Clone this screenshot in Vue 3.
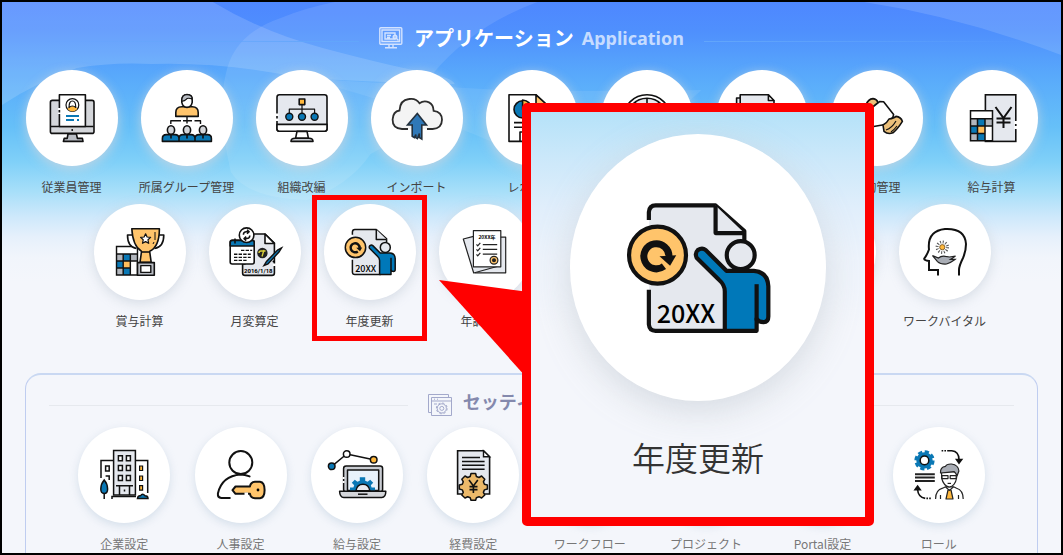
<script setup>
// Пустые пункты меню закрыты увеличенной карточкой
const applicationRows = [
  [
    { id: 'employee', icon: 'ic-employee', label: '従業員管理' },
    { id: 'group', icon: 'ic-group', label: '所属グループ管理' },
    { id: 'organization', icon: 'ic-organization', label: '組織改編' },
    { id: 'import', icon: 'ic-import', label: 'インポート' },
    { id: 'report', icon: 'ic-report', label: 'レポート' },
    { id: 'clock', icon: 'ic-clock', label: '' },
    { id: 'docs', icon: 'ic-docs', label: '' },
    { id: 'contract', icon: 'ic-contract', label: '契約管理' },
    { id: 'payroll', icon: 'ic-payroll', label: '給与計算' }
  ],
  [
    { id: 'bonus', icon: 'ic-bonus', label: '賞与計算' },
    { id: 'monthly', icon: 'ic-monthly', label: '月変算定' },
    { id: 'yearly', icon: 'ic-yearly', label: '年度更新', active: true },
    { id: 'adjust', icon: 'ic-adjust', label: '年調申告' },
    { id: 'slot-1', icon: '', label: '' },
    { id: 'slot-2', icon: '', label: '' },
    { id: 'slot-3', icon: '', label: '' },
    { id: 'vital', icon: 'ic-vital', label: 'ワークバイタル' }
  ]
]

const settings = [
  { id: 'company', icon: 'ic-company', label: '企業設定' },
  { id: 'personnel', icon: 'ic-personnel', label: '人事設定' },
  { id: 'salary', icon: 'ic-salary', label: '給与設定' },
  { id: 'expense', icon: 'ic-expense', label: '経費設定' },
  { id: 'workflow', icon: '', label: 'ワークフロー' },
  { id: 'project', icon: '', label: 'プロジェクト' },
  { id: 'portal', icon: '', label: 'Portal設定' },
  { id: 'role', icon: 'ic-role', label: 'ロール' }
]
</script>

<template>
  <!-- Набор иконок -->
  <svg class="sprite" aria-hidden="true">
    <symbol id="ic-employee" viewBox="0 0 48 48">
      <g stroke="#111" stroke-width="1.6" stroke-linejoin="round">
        <rect x="2.4" y="6.4" width="43.6" height="33" rx="2" fill="#d4d6da" />
        <path d="M3 32.5h42.6" />
        <path d="M20 40h8.4l1 4.4h5l.6 3H15.4l.8-3h3z" fill="#b9bdc4" />
        <path d="M11.4 32.5V.8h26v31.7z" fill="#fff" />
        <circle cx="24.4" cy="11" r="6.4" fill="#fff" stroke-width="1.2" />
        <path d="M19.4 15q1.4-3 5-3t5 3q-2 2.4-5 2.4t-5-2.4z" fill="#ffb83d" stroke="none" />
        <path d="M21 13.500q0-6.500 3.400-6.500t3.400 6.500q-1.400-1.500-3.400-1.500t-3.400 1.500z" fill="#fff" stroke-width="1.2" />
      </g>
      <path d="M18 22h13M18 26h8M29 26h2" stroke="#0a78b5" stroke-width="1.8" />
      <path d="M11.400 14v2M11.400 18.500v1.500" stroke="#fff" stroke-width="3" />
      <circle cx="24.2" cy="36" r=".9" />
    </symbol>

    <symbol id="ic-group" viewBox="0 0 48 48">
      <g stroke="#111" stroke-width="1.6" stroke-linejoin="round">
        <path d="M12.800 22.400v-4q0-5.400 6-5.600h10.400q6 .2 6 5.600v4z" fill="#ffc46b" />
        <path d="M18.800 6q0-5.400 5.200-5.400T29.200 6v2.400q-1 5-5.200 5t-5.200-5z" fill="#fff" />
        <path d="M18.800 7q0-6.400 5.200-6.400T29.200 5q-5-1.600-6 .4-2 2-4.400 1.600z" fill="#b9bdc4" stroke-width="1.2" />
        <path d="M24 22.400v7M7.800 30v-3.200H18M20 26.800h9M31.500 26.800h6V30" fill="none" stroke-width="1.4" />
        <path d="M-.6 47.400v-3q0-3.800 4-3.800H12q4 0 4 3.800v3zM16 47.400v-3q0-3.800 4-3.800h8q4 0 4 3.800v3zM32 47.400v-3q0-3.800 4-3.800h8.400q4 0 4 3.800v3z" fill="#0a78b5" />
        <ellipse cx="8" cy="36" rx="3.600" ry="4.300" fill="#d4d6da" />
        <ellipse cx="24" cy="36" rx="3.600" ry="4.300" fill="#d4d6da" />
        <ellipse cx="40" cy="36" rx="3.600" ry="4.300" fill="#d4d6da" />
        <path d="M8 40.600v4M24 40.600v4M40 40.600v4" />
      </g>
    </symbol>

    <symbol id="ic-organization" viewBox="0 0 48 48">
      <g stroke="#111" stroke-width="1.6" stroke-linejoin="round">
        <rect x="-1" y=".8" width="50" height="36.400" rx="2.400" fill="#e5e8ee" />
        <path d="M-1 30.400h50v4.400q0 2.400-2.400 2.400H1.400Q-1 37.200-1 34.800z" fill="#fff" />
        <path d="M19 37.400h10l1.400 6.800H17.600z" fill="#fff" />
        <path d="M13 47.400q0-3.200 4-3.200h14q4 0 4 3.200z" fill="#c9ccd2" />
        <path d="M24 10v9M11.300 19v-3.800h25.300V19" fill="none" stroke-width="1.2" />
        <rect x="21.200" y="5" width="5.600" height="5.600" fill="#ffb83d" />
        <circle cx="11.300" cy="22.700" r="3.500" fill="#0a78b5" stroke-width="1.4" />
        <circle cx="24" cy="22.700" r="3.500" fill="#0a78b5" stroke-width="1.4" />
        <circle cx="36.600" cy="22.700" r="3.500" fill="#0a78b5" stroke-width="1.4" />
      </g>
      <path d="M-1 19.500v2.500M-1 24.500v2.500" stroke="#fff" stroke-width="3" />
    </symbol>

    <symbol id="ic-import" viewBox="0 0 48 48">
      <path d="M15 35H9Q-.6 34.500-.4 25.500 0 17.500 6.500 16.500 7 6 16 5q7-1.200 10.500 4.200Q31 6 36 8.400q4.400 2 4.600 8.400 8.400 1 8.400 9-.2 9-9.400 9.200H34" fill="#f4f4f4" stroke="#2d2d2d" stroke-width="1.8" />
      <path d="M24.300 19.400L33.500 31h-4.700v14l-2.400-1.400v-4l-2 5-1.600-1v-3l-1.400 3-2.200-1.400V31h-4.700z" fill="#2f78b7" stroke="#23303c" stroke-width="1.6" />
    </symbol>

    <symbol id="ic-report" viewBox="0 0 48 48">
      <g stroke="#111" stroke-width="1.6" stroke-linejoin="round">
        <path d="M1 47.400V.8h27L38 10v37.400z" fill="#fff" />
        <path d="M28 .8L38 10H28z" fill="#ffc46b" />
        <circle cx="14.600" cy="15.400" r="8.600" fill="#0a78b5" />
        <path d="M14.600 15.400V6q8 .6 9 9.400z" fill="#ffb83d" />
        <path d="M6 28.600h24M6 33.200h24M12 47v-9h8v9" fill="none" />
      </g>
    </symbol>

    <symbol id="ic-clock" viewBox="0 0 48 48">
      <g stroke="#111" stroke-width="1.6" fill="none">
        <circle cx="24" cy="24.800" r="24" fill="#fff" />
        <circle cx="24" cy="24.800" r="20.500" fill="#e5e8ee" />
        <path d="M24 4v12M12 8l3 5M36 8l-3 5M24 25l8 6" />
      </g>
    </symbol>

    <symbol id="ic-docs" viewBox="0 0 48 48">
      <g stroke="#111" stroke-width="1.6" stroke-linejoin="round" fill="#e5e8ee">
        <path d="M-1.400 47V4h32v43z" />
        <path d="M2.200 42V.8h28L36 7v35z" />
        <path d="M30.400.8V6.500H36z" fill="#fff" />
      </g>
    </symbol>

    <symbol id="ic-contract" viewBox="0 0 48 48">
      <g stroke="#111" stroke-width="1.6" stroke-linejoin="round">
        <path d="M13 11q2-6 7-6.400 4 .6 5 4l-6 5z" fill="#ecc07a" />
        <path d="M20 13l6.600-5.400 4 .2L40.600 20.500q0 4-8.400 10L12 34z" fill="#fff" />
        <path d="M30 31q4-2 6-6 5-.6 7-2.600 5 .6 6.400 5-5 8-9.400 11.400-5 2-9-1.400z" fill="#ecc07a" />
        <path d="M33 36q6-2 10-9M38 38q3-2 6-6" fill="none" stroke-width="1.2" />
      </g>
    </symbol>

    <symbol id="ic-calc" viewBox="0 0 24 32">
      <path d="M1 1h22v30H1z" fill="#fff" />
      <path d="M1 9h7v7.300H1zM15.500 9H23v7.300h-7.500zM1 23.600h7V31H1z" fill="#b2b6bd" />
      <path d="M8 9h7.500v7.300H8zM1 16.300h7v7.300H1zM8 23.600h7.500V31H8z" fill="#0a78b5" />
      <path d="M8 16.300h7.500v7.300H8z" fill="#ffbe5c" />
      <path d="M1 1h22v30H1zM1 9h22M1 16.300h22M1 23.600h14.500M8 9v22M15.500 9v22" fill="none" stroke="#111" stroke-width="1.5" />
    </symbol>

    <symbol id="ic-payroll" viewBox="0 0 48 48">
      <rect x="17.400" y=".8" width="30.400" height="46.600" fill="#e5e8ee" stroke="#111" stroke-width="1.6" />
      <path d="M47.800 27v3M47.800 32v3" stroke="#fff" stroke-width="3" />
      <use href="#ic-calc" x="1.500" y="15.600" width="24" height="32.400" />
      <path d="M27.500 13l8 11 8-11M35.500 24v10M28.500 24.500h14M28.500 28.500h14" fill="none" stroke="#111" stroke-width="2" />
    </symbol>

    <symbol id="ic-bonus" viewBox="0 0 48 48">
      <use href="#ic-calc" x="-.5" y="17.500" width="23" height="30.500" />
      <g stroke="#111" stroke-width="1.6" stroke-linejoin="round">
        <path d="M17 7h-5.500q0 12 9 13.500M42 7h5.800q0 12-9.200 13.500" fill="#fff" />
        <path d="M15.800.8h27.600q0 18-9.600 22.400v1.200l1.400 10H24l1.400-10v-1.200Q16.800 18 15.800.8z" fill="#ffc46b" />
        <path d="M25.500 24h8.200" />
        <rect x="21.500" y="34.600" width="16.800" height="12.600" fill="#b9bdc4" />
        <rect x="24.800" y="37.600" width="10" height="6.800" fill="#fff" stroke-width="1.4" />
        <path d="M29.600 5.800l1.500 3.200 3.500.4-2.600 2.400.7 3.500-3.100-1.700-3.100 1.700.7-3.500-2.600-2.400 3.500-.4z" fill="#fff" stroke-width="1.2" />
        <path d="M39 4v8M38 14l-1 2" stroke-width="1" />
      </g>
    </symbol>

    <symbol id="ic-monthly" viewBox="0 0 48 48">
      <g stroke="#111" stroke-width="1.6" stroke-linejoin="round">
        <path d="M11.600 36v9q0 2.400 2.400 2.400h27q2.400 0 2.400-2.400V15L34 6H14v30z" fill="#e5e8ee" />
        <path d="M34 6v9.500h9.400z" fill="#fff" />
        <rect x="-.8" y="12.400" width="24" height="23.600" rx="2" fill="#fff" />
        <path d="M-.8 18v-3.400q0-2.200 2.200-2.200H21q2.200 0 2.200 2.200V18z" fill="#0a78b5" />
        <path d="M4 10.500v5" />
        <circle cx="15.600" cy="7.200" r="7.300" fill="#fff" />
        <path d="M12.400 6.800q0-3 3-3h2.400M16 1.800l2.200 2-2.200 2M18.800 7.600q0 3-3 3h-2.400M15.200 8.600l-2.200 2 2.200 2" fill="none" stroke-width="1.5" />
      </g>
      <path d="M10 22.400h3.400m1.200 0H18m1.200 0h2M3 26.200h3.400m1.200 0H11m1.200 0h3.400m1.200 0h3M3 29.400h3.400m1.200 0H11m1.200 0h3.400m1.200 0h3M3 32.400h3.400m1.200 0H11m1.200 0h3.400" stroke="#111" stroke-width="1.4" />
      <circle cx="31.400" cy="25" r="5.200" fill="#222" />
      <path d="M28 25q0-2 2-2h4.500M33 22l-2 6.500" fill="none" stroke="#d9cf3a" stroke-width="1.4" />
      <path d="M50.500 20l-4 2-11 11.500-2.500 4 4-1.600L48 24z" fill="#0a78b5" stroke="#111" stroke-width="1.4" />
      <circle cx="42.600" cy="33.500" r="1.100" />
      <path d="M43.400 35.500v2.500" stroke="#fff" stroke-width="3" />
      <text x="27.300" y="44.600" text-anchor="middle" font-family="Roboto, sans-serif" font-weight="700" font-size="6">2016/1/18</text>
    </symbol>

    <symbol id="ic-yearly" viewBox="0 0 48 48">
      <path d="M6.400 46.500V1.600h24l10.200 9.600v35.300z" fill="#e5e8ee" />
      <path d="M3.500 7h3v25h-3z" fill="#fff" />
      <g fill="none" stroke="#111" stroke-width="1.5" stroke-linejoin="round">
        <path d="M6.400 6.800V4q.2-2.400 2.400-2.400h21.500l10.300 9.200v3.400M6.400 31.800v12.400q.2 2.300 2.400 2.300h26" />
        <path d="M30.300 1.600v9.900h10.300" fill="#e5e8ee" />
        <circle cx="9.500" cy="19.400" r="10.200" fill="#ffc46b" />
        <circle cx="39.300" cy="19.400" r="5" fill="#e5e8ee" />
        <path d="M26.800 17.600l7.400 7.400H44q5 .4 5.200 5.600v10.800q0 2-1.700 2t-2.500-1.200v4.300H33.600V32.400q0-2.400-2.100-4.200l-8-7.900q-.7-1.600.4-2.700 1.600-1 2.900 0z" fill="#0078b9" />
        <path d="M45 29.800v13" />
      </g>
      <path d="M13.600 20A4.500 4.500 0 1 0 11.800 23.400" fill="none" stroke="#111" stroke-width="2.500" />
      <path d="M10.200 19.800l6-.4-2.200 3.800z" fill="#111" />
      <text x="19.700" y="43.800" text-anchor="middle" font-family="'Noto Sans CJK JP', sans-serif" font-weight="500" font-size="9">20XX</text>
    </symbol>

    <symbol id="ic-adjust" viewBox="0 0 48 48">
      <g stroke="#222" stroke-width="1.2" stroke-linejoin="round">
        <path d="M36 9.200h8.700v35.600H14z" fill="#e5e8ee" />
        <path d="M12.500 8.400L2.300 11l10.400 34L36 38.500z" fill="#e5e8ee" />
        <path d="M12.400 2.600h27.400v36.200H12.400z" fill="#fff" />
        <path d="M21.800 16.600h14.400M21.800 21.400h14.400M21.800 26.200h14.400" />
        <path d="M15.500 16.400l1.200 1.400 2.600-3M15.500 21.400l1.200 1.400 2.600-3M15.500 26.400l1.200 1.400 2.600-3" fill="none" />
        <circle cx="33" cy="32.200" r="3.900" fill="#ffc46b" />
        <circle cx="33" cy="32.200" r="1.400" fill="#222" />
      </g>
      <text x="26" y="11" text-anchor="middle" font-family="'Noto Sans CJK JP', sans-serif" font-weight="700" font-size="5">20XX年</text>
    </symbol>

    <symbol id="ic-vital" viewBox="0 0 48 48">
      <path d="M17 47.500V42H8v-9q-5-.6-4.800-2.400Q6 27 8 21.500 6 3 24 1q20-1 21 15 0 7-3 14-4 8-4 12v5.500" fill="none" stroke="#111" stroke-width="2" />
      <circle cx="21.300" cy="19.200" r="5.200" fill="none" stroke="#555" stroke-width="3" stroke-dasharray="1 1.700" />
      <circle cx="21.300" cy="19.200" r="2.600" fill="#ffb83d" stroke="#6b4a1c" stroke-width=".8" />
      <path d="M11.500 27.600l6 2.400q3-2.600 7-1.600l4 .6 6-1-5 3.400h4.500q-4 3-8.500 4.600-6 .4-9-2.400z" fill="#a9adb5" stroke="#222" stroke-width="1.2" />
    </symbol>

    <symbol id="ic-company" viewBox="0 0 48 48">
      <g stroke="#111" stroke-width="1.5" fill="none">
        <path d="M1 27V9.600h12M35.500 9.600h12.200V42" />
        <path d="M13.600 44V-.4h21.800V44z" fill="#e5e8ee" />
        <path d="M18.400 4.800h4v5h-4zM26.400 4.800h4v5h-4zM18.400 14.600h4v5h-4zM26.400 14.600h4v5h-4zM18.400 24.500h4v5h-4zM26.400 24.500h4v5h-4z" fill="#fff" />
        <path d="M5.600 15h3.600v5H5.600zM5.600 25h3.600v4" />
        <path d="M39.600 15h3v4.500h-3zM39.600 25h3v4.500h-3zM39.600 34.700h3v4.500h-3z" fill="#ffb83d" stroke-width="1.2" />
        <path d="M16 34.800h17M19.500 35v9M29.500 35v9M24.500 38.500v2M12 48v-2.500h24" />
        <path d="M4.200 42v6" />
        <path d="M4.200 29q3.400 4 3.400 9 0 4.500-3.400 4.500T.8 38q0-5 3.400-9z" fill="#0a78b5" />
        <path d="M37.500 47.400q.5-3 3-2.600 2-3 4.500 0 3 0 3 2.600z" fill="#0a78b5" />
      </g>
    </symbol>

    <symbol id="ic-personnel" viewBox="0 0 48 48">
      <g stroke="#111" stroke-width="2" stroke-linecap="round" stroke-linejoin="round" fill="none">
        <circle cx="23.800" cy="11.600" r="11.500" />
        <path d="M32.600 25.400q-5-1.800-9-1.800Q5 25 .9 42.500q-.4 4 3.400 4.600h8.500" />
        <path d="M18.500 35.500H33q.5-4.400 5-4.800h5q4.600.6 4.600 8.300T43 47.200h-5q-4.500-.2-5-4.400H18.500l-3-3.600z" fill="#ffc46b" />
      </g>
      <path d="M27.500 43h3.500" stroke="#fff" stroke-width="3" />
      <circle cx="41" cy="39" r="1.400" />
    </symbol>

    <symbol id="ic-salary" viewBox="0 0 48 48">
      <g stroke="#111" stroke-width="1.5" stroke-linejoin="round">
        <path d="M-1.300 15.300l15-12.300 27 5.700" fill="none" />
        <circle cx="-1.300" cy="15.300" r="3.300" fill="#0a78b5" />
        <circle cx="13.700" cy="3" r="3.300" fill="#fff" />
        <circle cx="40.700" cy="8.700" r="3.300" fill="#ffb83d" />
        <rect x="10.600" y="15" width="39" height="26" rx="2.500" fill="#c9ccd2" />
        <path d="M14.500 19h31.200v20.500H14.500z" fill="#e8f2fb" />
        <path d="M6.600 40.300h46.200q0 6.200-4 6.200h-38q-4 0-4.200-6.200z" fill="#d4d6da" />
        <path d="M25 43.200h9.500" />
      </g>
      <path d="M17 39.200v-2.600h3.400l.8-2.400-2.400-2.400 3-3 2.600 2 2.400-1v-3.600h5.400v3.600l2.400 1 2.600-2 3 3-2.400 2.400.8 2.400H42v2.600z" fill="#0a78b5" />
      <path d="M23 39.600q1-6.400 6.900-6.400t6.900 6.400z" fill="#e8eaee" stroke="#111" stroke-width="1.4" />
      <path d="M10.600 26v2M10.600 30v2" stroke="#fff" stroke-width="2" />
    </symbol>

    <symbol id="ic-expense" viewBox="0 0 48 48">
      <path d="M8.600 43V-.2h26l6 6V43z" fill="#e5e8ee" stroke="#111" stroke-width="1.6" />
      <path d="M34.500-.2v6h6.100z" fill="#fff" stroke="#111" stroke-width="1.4" />
      <path d="M13 6.400h18M13 10.400h22.600M13 14.200h22.600M13 18.200h22.600" stroke="#111" stroke-width="1.5" />
      <path d="M22 22.500h4.600l.8 3 2.600 1 2.600-1.500 3.200 3.200-1.400 2.600 1 2.400 3 .8v4l-3 .9-1 2.500 1.400 2.600-3.200 3-2.600-1.300-2.600 1-.8 2.600H22l-.8-2.600-2.500-1-2.700 1.300-3.200-3 1.500-2.600-1-2.500-3-.9v-4l3-.8 1-2.400-1.500-2.600L16 25l2.700 1.500 2.500-1z" fill="#ecb96a" stroke="#111" stroke-width="1.5" stroke-linejoin="round" />
      <path d="M20 29l4.400 6 4.400-6M24.400 35v7M20.500 35.600h8M20.500 38.600h8" fill="none" stroke="#111" stroke-width="1.6" />
    </symbol>

    <symbol id="ic-role" viewBox="0 0 48 48">
      <circle cx="9.500" cy="9.400" r="8.600" fill="none" stroke="#0a78b5" stroke-width="3" stroke-dasharray="4.200 2.550" />
      <circle cx="9.500" cy="9.400" r="7" fill="#0a78b5" stroke="#0a78b5" stroke-width="2.400" />
      <circle cx="9.500" cy="9.400" r="4.300" fill="#fff" stroke="#111" stroke-width="1.5" />
      <path d="M0 23.200h19.800M0 26.600h19.800M0 30h19.800" stroke="#222" stroke-width="2" />
      <g fill="none" stroke="#111" stroke-width="1.6">
        <path d="M26.600-.2h1.600m1.200 0H31m1.200 0h4.600q7 .6 7.200 8.700M15.800 47.400h-1.600m-1.200 0h-1.600m-1.200 0Q3 46 2.600 38.500" />
        <path d="M41.500 8.600h5.200L44 12.200zM0 38.600h5.200L2.600 35z" fill="#111" />
      </g>
      <g stroke="#222" stroke-width="1.2" stroke-linejoin="round">
        <path d="M20.600 48q0-9 7-10.800l3-1.400h8l3 1.400q6.600 2 6.600 10.800" fill="#fff" />
        <path d="M26.600 21v6q2 8 7.600 9 6-1 7.400-9v-6z" fill="#fff" />
        <path d="M25.500 22q-.4-6 5-6.600 1-2.600 6-2.400 7 1 7.400 7l-1.900 5q-1-3-3-4.500-6 1-13.500 1.500z" fill="#a9adb5" />
        <path d="M27 24.600h6v3h-6zM35.200 24.600h6v3h-6z" fill="#fff" />
        <path d="M32.600 32.400h3.400" />
        <path d="M33 39h3l2 9h-7z" fill="#ffb83d" />
        <path d="M30.600 36l3.800 3.400 4-3.400M25.500 44v4M43.500 44v4" fill="none" />
      </g>
    </symbol>

    <symbol id="ic-screen" viewBox="0 0 24 24">
      <g fill="none" stroke="#d3e3ff" stroke-width="1.4">
        <rect x=".8" y="1.800" width="22" height="16.500" rx="1" />
        <path d="M3 4h17.600v11.500H3zM10 18.500v3M14 18.500v3M6 21.800h12M6 7h10v6H6zM8 9.500h4M8 11.500h3" />
        <circle cx="16" cy="11" r="1.800" />
        <path d="M17.500 12.500l2 2" />
      </g>
    </symbol>

    <symbol id="ic-window" viewBox="0 0 24 24">
      <g fill="none" stroke="#a3a9cb" stroke-width="1">
        <path d="M3.500 19.500h-3v-18h20v3M3.500 4.500h20v18h-20zM3.500 8h20M6 6.200h1M9 6.200h1M6 11h3" />
        <circle cx="13.800" cy="15.400" r="4.600" />
        <circle cx="13.800" cy="15.400" r="5.400" stroke-dasharray="2.200 2" />
        <circle cx="13.800" cy="15.400" r="2" />
      </g>
    </symbol>
  </svg>

  <main class="portal">
    <svg class="waves" viewBox="0 0 1060 260" preserveAspectRatio="none" aria-hidden="true">
      <path d="M0 0h211q50 30 110 46 75 20 112 26 20 6 20 10-60-1-153-6Q225 60 150 62 110 60 75 66 35 80 0 103z" fill="#fff" fill-opacity=".15" />
      <path d="M333 0h203q-65 24-105 72-20 60-62 80-22 32-64 46-60-2-76-28-14-60-5-98 8-40 55-56 24-10 54-16z" fill="#fff" fill-opacity=".1" />
      <path d="M863 0h197v53Q960 15 863 0z" fill="#fff" fill-opacity=".13" />
      <path d="M300 76q90 6 200 12 100 2 200 0-60 60-200 56-90-40-200-68z" fill="#fff" fill-opacity=".08" />
    </svg>

    <section class="panel">
      <h2 class="heading">
        <svg class="heading-icon"><use href="#ic-screen" /></svg>
        <span class="heading-title">アプリケーション</span>
        <span class="heading-sub">Application</span>
      </h2>
      <nav class="rows" aria-label="アプリケーション">
        <div v-for="(row, index) in applicationRows" :key="index" class="menu">
          <a v-for="item in row" :key="item.id" href="#" class="menu-item" :class="{ active: item.active }">
            <span class="circle">
              <svg v-if="item.icon" class="icon"><use :href="`#${item.icon}`" /></svg>
            </span>
            <span class="label">{{ item.label }}</span>
          </a>
        </div>
      </nav>
    </section>

    <section class="panel settings">
      <h2 class="heading">
        <svg class="heading-icon"><use href="#ic-window" /></svg>
        <span class="heading-title">セッティング</span>
        <span class="heading-sub">Setting</span>
      </h2>
      <nav class="menu" aria-label="セッティング">
        <a v-for="item in settings" :key="item.id" href="#" class="menu-item">
          <span class="circle">
            <svg v-if="item.icon" class="icon"><use :href="`#${item.icon}`" /></svg>
          </span>
          <span class="label">{{ item.label }}</span>
        </a>
      </nav>
    </section>

    <aside class="callout">
      <span class="circle">
        <svg class="icon"><use href="#ic-yearly" /></svg>
      </span>
      <span class="label">年度更新</span>
    </aside>
  </main>
</template>

<style>
body {
  margin: 0;
}

/* Части иконок могут слегка выходить за сетку 48x48 */
symbol {
  overflow: visible;
}
</style>

<style scoped>
.sprite {
  display: none;
}

.portal {
  position: relative;
  box-sizing: border-box;
  height: 100vh;
  overflow: hidden;
  border: 2px solid #000;
  background: linear-gradient(
    #4e87ff 0,
    #4f90fd 30px,
    #59aafb 75px,
    #66c0f8 125px,
    #80d0f8 160px,
    #a8dff9 190px,
    #cde8fb 214px,
    #e6f0fb 235px,
    #f1f5fb 255px,
    #f4f6fb 280px
  );
  font-family: 'Noto Sans CJK JP', sans-serif;
}

.waves {
  position: absolute;
  top: 0;
  left: 0;
  width: 100%;
  height: 260px;
}

.panel {
  position: relative;
  padding: 20px 12px 0;
}

.heading {
  display: flex;
  align-items: center;
  margin: 0 12px 16px;
  height: 32px;
  font-weight: 700;
  color: #fff;
}

.heading::before,
.heading::after {
  content: '';
  flex: 1;
  height: 1px;
  margin-top: 6px;
}

.heading::before {
  margin-right: 20px;
  background: linear-gradient(90deg, transparent, #62a6fb);
}

.heading::after {
  margin-left: 20px;
  background: linear-gradient(90deg, #62a6fb, transparent);
}

.heading-icon {
  width: 24px;
  height: 24px;
  margin-right: 11px;
}

.heading-title {
  font-size: 20px;
  line-height: 32px;
}

.heading-sub {
  margin-left: 8px;
  font-family: 'Noto Sans', sans-serif;
  font-size: 18px;
  line-height: 32px;
  color: #c6dcff;
}

.rows {
  display: flex;
  flex-direction: column;
  gap: 8px;
}

.menu {
  display: flex;
  justify-content: center;
}

.rows .menu:last-child {
  padding-left: 21px;
}

.menu-item {
  position: relative;
  flex: 0 1 115px;
  display: flex;
  flex-direction: column;
  align-items: center;
  color: #444;
  text-decoration: none;
}

.circle {
  display: flex;
  align-items: center;
  justify-content: center;
  width: 92px;
  height: 96px;
  border-radius: 50%;
  background: #fff;
  box-shadow: 0 3px 12px rgba(205, 212, 222, 0.8);
}

.icon {
  width: 48px;
  height: 48px;
  overflow: visible;
}

.label {
  height: 18px;
  margin-top: 12px;
  font-size: 12px;
  line-height: 18px;
  white-space: nowrap;
}

/* Рамка вокруг выбранного пункта */
.menu-item.active::after {
  content: '';
  position: absolute;
  inset: -9px 0 -11px;
  border: 5px solid #f00;
}

.settings {
  margin: 43px 23px 0;
  padding: 14px 40px 0;
  height: 240px;
  border: 1px solid #bfcdf0;
  border-top: 2px solid #c9d8f2;
  border-radius: 16px;
}

.settings .heading {
  margin: 0 -17px 6px;
  color: #8489ad;
}

.settings .heading::before,
.settings .heading::after {
  margin-top: 0;
  background: #e6e9ee;
}

.settings .heading-title,
.settings .heading-sub {
  padding-bottom: 9px;
}

.settings .heading-title {
  font-size: 18px;
}

.settings .heading-sub {
  font-size: 16px;
  color: #a3a9cb;
}

.settings .menu-item {
  flex-basis: 12.5%;
  color: #777;
}

.settings .circle {
  box-shadow: 0 3px 8px rgba(205, 217, 230, 0.8);
}

/* Увеличенная карточка поверх меню */
.callout {
  position: absolute;
  top: 101px;
  left: 49.1%;
  box-sizing: border-box;
  width: 352px;
  padding: 22px 0 36px;
  display: flex;
  flex-direction: column;
  align-items: center;
  border: 9px solid #f00;
  border-radius: 5px;
  background: linear-gradient(#b5e2f9 0, #cbe8fa 45px, #e0eefb 95px, #edf3fb 145px, #f4f6fb 215px);
}

.callout::before {
  content: '';
  position: absolute;
  top: 168px;
  left: -92px;
  width: 88px;
  height: 98px;
  background: #f00;
  clip-path: polygon(0 0, 100% 12%, 100% 100%);
}

.callout .circle {
  width: 256px;
  height: 267px;
  box-shadow: 0 9px 34px rgba(205, 211, 219, 0.8);
}

.callout .icon {
  width: 134px;
  height: 134px;
}

.callout .label {
  height: 48px;
  margin-top: 32px;
  font-size: 33px;
  font-weight: 350;
  line-height: 48px;
  color: #333;
}
</style>
